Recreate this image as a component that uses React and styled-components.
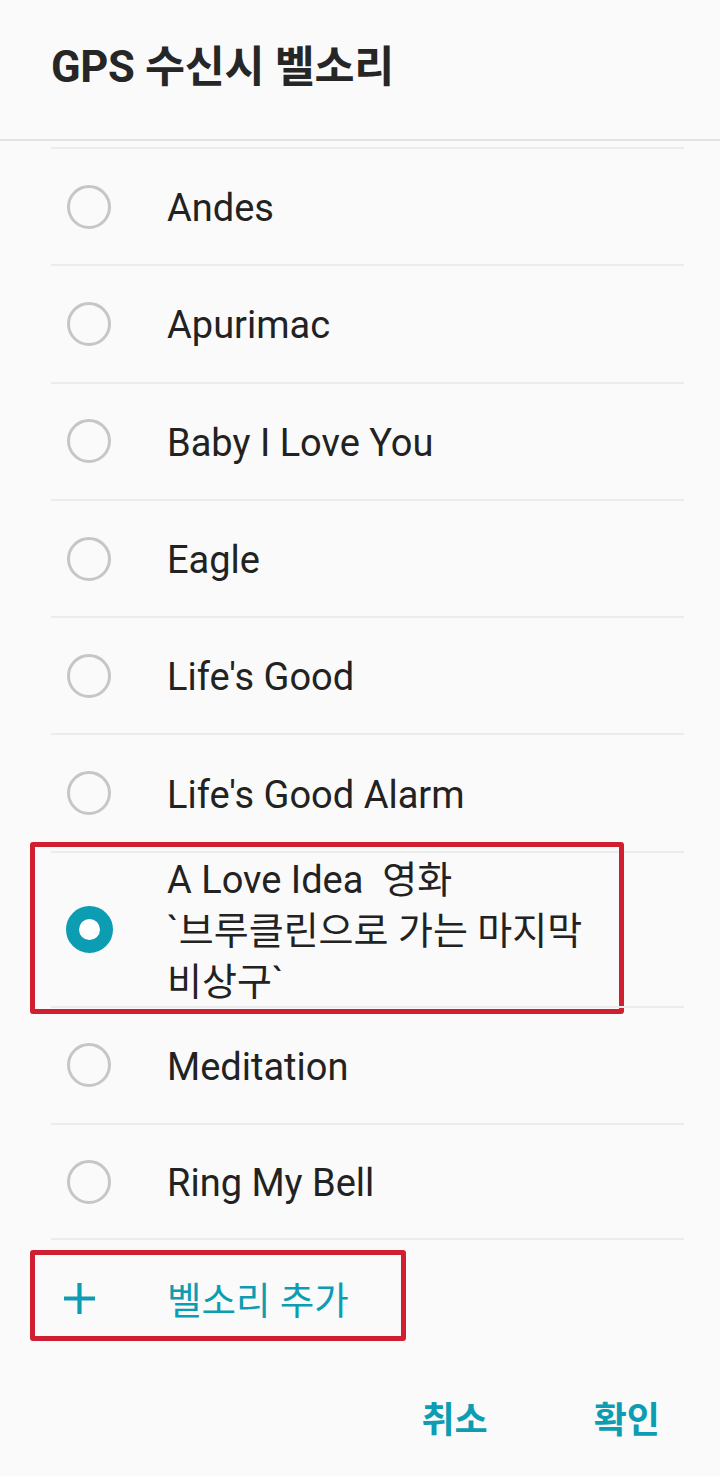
import React from "react";
import styled, { createGlobalStyle } from "styled-components";

const Global = createGlobalStyle`
  html, body { margin: 0; padding: 0; background: #fafafa; }
  body { font-family: Roboto, "Noto Sans CJK KR", sans-serif; }
`;

const TEAL = "#0c9db2";
const RED = "#d01f30";

const Page = styled.div`
  width: 720px;
  height: 1476px;
  background: #fafafa;
  display: flex;
  flex-direction: column;
  overflow: hidden;
`;

const Header = styled.header`
  height: 139px;
  display: flex;
  align-items: center;
  padding: 0 51px;
  border-bottom: 2px solid #e4e4e4;
  box-sizing: content-box;
`;

const Title = styled.h1`
  margin: 0;
  font-size: 43.5px;
  font-weight: 700;
  color: #262626;
  letter-spacing: -0.3px;
  padding-bottom: 12px;
`;

const List = styled.ul`
  list-style: none;
  margin: 6px 36px 0 51px;
  padding: 0;
`;

const Row = styled.li`
  position: relative;
  box-sizing: border-box;
  height: ${(p) => (p.$tall ? "155px" : "117.3px")};
  border-top: 2px solid #ececec;
  display: flex;
  align-items: center;
  gap: 56px;
  padding-left: 16px;
  &:last-child {
    border-bottom: 2px solid #ececec;
  }
`;

const Radio = styled.span`
  flex: none;
  box-sizing: border-box;
  width: ${(p) => (p.$on ? "47px" : "44px")};
  height: ${(p) => (p.$on ? "47px" : "44px")};
  margin-left: ${(p) => (p.$on ? "-1.5px" : "0")};
  margin-right: ${(p) => (p.$on ? "-1.5px" : "0")};
  border-radius: 50%;
  border: ${(p) => (p.$on ? `13.5px solid ${TEAL}` : "3px solid #c6c6c6")};
  background: ${(p) => (p.$on ? "#fff" : "transparent")};
`;

const Label = styled.span`
  font-size: 38px;
  color: #222;
  line-height: 51px;
  white-space: pre;
  padding-top: 4px;
`;

const Highlight = styled.div`
  position: absolute;
  left: ${(p) => p.$left}px;
  top: ${(p) => p.$top}px;
  width: ${(p) => p.$w}px;
  height: ${(p) => p.$h}px;
  box-sizing: border-box;
  border: 5px solid ${RED};
  border-radius: 3px;
  pointer-events: none;
`;

const AddRow = styled.div`
  position: relative;
  height: 117px;
  margin-left: 51px;
  display: flex;
  align-items: center;
  gap: 70px;
  padding-left: 11px;
`;

const PlusIcon = styled.svg`
  flex: none;
  width: 35px;
  height: 35px;
`;

const AddLabel = styled.span`
  font-size: 37.5px;
  color: ${TEAL};
  margin-top: -2px;
`;

const Actions = styled.div`
  flex: 1;
  display: flex;
  justify-content: flex-end;
  align-items: center;
  gap: 106px;
  padding: 0 60px 0 0;
`;

const ActionButton = styled.button`
  background: none;
  border: none;
  padding: 0;
  font-family: Roboto, "Noto Sans CJK KR", sans-serif;
  font-size: 36px;
  font-weight: 700;
  color: ${TEAL};
  cursor: pointer;
`;

const items = [
  ["Andes"],
  ["Apurimac"],
  ["Baby I Love You"],
  ["Eagle"],
  ["Life's Good"],
  ["Life's Good Alarm"],
  ["A Love Idea  영화", "`브루클린으로 가는 마지막", "비상구`"],
  ["Meditation"],
  ["Ring My Bell"],
];

export default function App() {
  const selected = 6;
  return (
    <>
      <Global />
      <Page>
        <Header>
          <Title>GPS 수신시 벨소리</Title>
        </Header>
        <List>
          {items.map((lines, i) => (
            <Row key={lines[0]} $tall={i === selected}>
              <Radio $on={i === selected} />
              <Label>{lines.join("\n")}</Label>
              {i === selected && (
                <Highlight $left={-21} $top={-11} $w={594} $h={172} />
              )}
            </Row>
          ))}
        </List>
        <AddRow>
          <PlusIcon viewBox="0 0 35 35">
            <path d="M17.5 2v31M2 17.5h31" stroke={TEAL} strokeWidth="4.2" fill="none" />
          </PlusIcon>
          <AddLabel>벨소리 추가</AddLabel>
          <Highlight $left={-21} $top={10} $w={376} $h={91} />
        </AddRow>
        <Actions>
          <ActionButton>취소</ActionButton>
          <ActionButton>확인</ActionButton>
        </Actions>
      </Page>
    </>
  );
}
